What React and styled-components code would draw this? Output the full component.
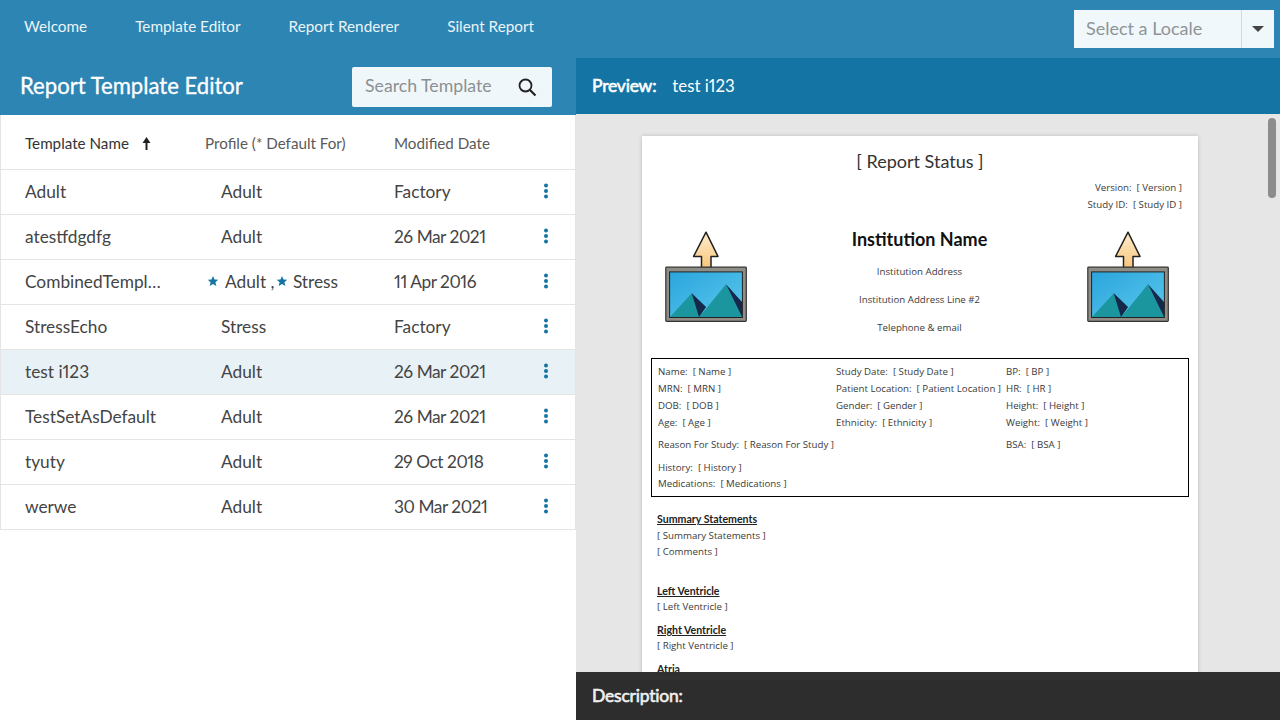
import React from "react";
import styled, { createGlobalStyle } from "styled-components";

const Global = createGlobalStyle`
  html, body { margin: 0; padding: 0; height: 100%; background: #fff; }
  body { font-family: "Lato", "Open Sans", sans-serif; overflow: hidden; font-variant-numeric: proportional-nums; }
  * { box-sizing: border-box; }
`;

const Page = styled.div`
  width: 1280px; height: 720px; display: flex; flex-direction: column; overflow: hidden;
`;
const TopBar = styled.header`
  height: 58px; flex: none; background: #2d85b3; display: flex; align-items: center;
  justify-content: space-between; padding: 0 6px 2px 24px;
`;
const Nav = styled.nav`display: flex; gap: 48px; padding-bottom: 4px;`;
const NavLink = styled.a`font-size: 15.3px; color: #eaf4f8; white-space: nowrap;`;
const LocaleSelect = styled.div`
  width: 200px; height: 38px; background: #f0f8fb; display: flex; align-items: center; margin-top: 2px;
`;
const LocaleText = styled.span`
  flex: 1; padding: 0 0 2px 12px; font-size: 18px; color: #8f9496; line-height: 34px;
`;
const LocaleCaret = styled.span`
  width: 33px; height: 38px; border-left: 1px solid #c4dde8; display: flex; align-items: center; justify-content: center;
  &::after { content: ""; border: 6px solid transparent; border-top: 6px solid #444; border-bottom: 0; }
`;
const Main = styled.div`flex: 1; display: flex; min-height: 0;`;
const LeftPanel = styled.section`width: 576px; flex: none; display: flex; flex-direction: column;`;
const LeftHeader = styled.div`
  height: 57px; flex: none; background: #2d85b3; display: flex; align-items: center; justify-content: space-between;
  padding: 0 24px 0 20px;
`;
const PanelTitle = styled.h1`margin: 0 0 2px; font-size: 22.1px; font-weight: 400; color: #fff; -webkit-text-stroke: 0.3px #fff;`;
const SearchBox = styled.div`
  width: 200px; height: 40px; margin-top: 1px; background: #f0f7fa; border-radius: 2px; display: flex; align-items: center;
  justify-content: space-between; padding: 0 15px 0 13px;
`;
const SearchText = styled.span`font-size: 17.7px; color: #8c9092; padding-bottom: 3px;`;
const Table = styled.div`display: flex; flex-direction: column; border-left: 1px solid #e4e4e4; border-right: 1px solid #e4e4e4;`;
const Row = styled.div`
  height: 45px; display: grid; grid-template-columns: 180px 189px 1fr 32px; align-items: center; padding: 0 13px 2px 24px;
  border-bottom: 1px solid #e4e4e4; background: ${(p) => (p.$selected ? "#e8f1f5" : "#fff")};
  color: #444; font-size: 17.3px;
`;
const HeadRow = styled(Row)`height: 55px; font-size: 15.2px; color: #555; padding: 2px 13px 0 24px;`;
const HeadCell = styled.span`display: flex; align-items: center; gap: 13px; color: ${(p) => (p.$active ? "#333" : "#5a5a5a")};`;
const NameCell = styled.span`display: block; width: 138px; overflow: hidden; white-space: nowrap; text-overflow: ellipsis;`;
const ProfileCell = styled.span`display: flex; align-items: center; padding-left: ${(p) => (p.$star ? "2px" : "16px")}; white-space: pre;`;
const DateCell = styled.span`letter-spacing: ${(p) => (p.$numeric ? "-0.45px" : "0")};`;
const StarIcon = styled.svg`
  width: 12px; height: 12px; flex: none; fill: #1474a4;
  margin: 0 ${(p) => (p.$tight ? 5 : 6)}px 0 ${(p) => (p.$tight ? -3 : 0)}px;
`;
const Kebab = styled.svg`width: 6px; height: 16px; justify-self: center; fill: #1474a4;`;
const RightPanel = styled.section`flex: 1; min-width: 0; display: flex; flex-direction: column; position: relative; background: #2f2f2f;`;
const PreviewHeader = styled.div`
  height: 56px; flex: none; background: #1474a4; display: flex; align-items: center; gap: 16px; padding: 0 16px 2px; color: #fff; font-size: 16.8px;
`;
const StrongLabel = styled.strong`font-weight: 400; font-size: 17.5px; letter-spacing: -0.2px; -webkit-text-stroke: 0.6px currentColor;`;
const PreviewArea = styled.div`
  height: 566px; flex: none; background: #e6e6e6; display: flex; justify-content: center; overflow: hidden; padding: 22px 82px 0 66px; position: relative;
`;
const Paper = styled.article`
  width: 556px; height: 600px; flex: none; background: #fff; box-shadow: 0 0 4px rgba(0,0,0,.18);
  padding: 14px 9px 0; color: #3a3a3a; font-family: "Open Sans", "Lato", sans-serif; font-size: 9.7px; white-space: pre;
`;
const ReportStatus = styled.div`text-align: center; font-size: 18px; line-height: 22px; color: #333; font-family: "Lato", sans-serif;`;
const MetaBlock = styled.div`text-align: right; padding-right: 7px; margin-top: 7px; line-height: 17px;`;
const Masthead = styled.div`display: grid; grid-template-columns: 100px 1fr 100px; align-items: start; margin-top: 13px; padding: 0 2px 0 14px;`;
const Logo = styled.svg`width: 84px; height: 93px; display: block; margin-top: 4px;`;
const InstitutionBlock = styled.div`text-align: center; padding: 3px 13px 0 0; color: #3a3a3a;`;
const InstitutionName = styled.div`font-size: 18px; font-weight: 700; line-height: 20px; color: #111; font-family: "Lato", sans-serif; margin-bottom: 9px;`;
const InstitutionLine = styled.div`line-height: 28px;`;
const PatientBox = styled.div`
  border: 1px solid #000; height: 139px; margin-top: 16px; padding: 4px 6px 0;
  display: grid; grid-template-columns: 178px 170px 1fr; grid-auto-rows: 17px;
`;
const Cell = styled.div`white-space: pre; line-height: 17px; grid-column: ${(p) => p.$span || "auto"}; margin-top: ${(p) => p.$mt || 0}px;`;
const Section = styled.div`padding-left: 6px; line-height: 16.5px; margin-top: ${(p) => p.$mt || 0}px;`;
const SectionTitle = styled.div`font-family: "Lato", sans-serif; font-size: 10.6px; font-weight: 700; text-decoration: underline; color: #222;`;
const DescriptionBar = styled.div`
  position: absolute; left: 0; right: 0; bottom: 0; height: 48px; background: rgba(45,45,45,.98);
  display: flex; align-items: center; padding: 0 16px 1px; color: #f0f0f0;
`;
const ScrollThumb = styled.div`
  position: absolute; top: 4px; right: 4px; width: 8px; height: 80px; border-radius: 4px; background: #8c8c8c;
`;

const rows = [
  ["Adult", "Adult", "Factory"],
  ["atestfdgdfg", "Adult", "26 Mar 2021"],
  ["CombinedTemplate", "*", "11 Apr 2016"],
  ["StressEcho", "Stress", "Factory"],
  ["test i123", "Adult", "26 Mar 2021", true],
  ["TestSetAsDefault", "Adult", "26 Mar 2021"],
  ["tyuty", "Adult", "29 Oct 2018"],
  ["werwe", "Adult", "30 Mar 2021"],
];

const Star = ({ tight }) => (
  <StarIcon $tight={tight} viewBox="0 0 24 24"><path d="M12 2l3 7 7.5.7-5.7 5 1.8 7.3L12 18l-6.6 4 1.8-7.3-5.7-5L9 9z" /></StarIcon>
);

const KebabIcon = () => (
  <Kebab viewBox="0 0 6 16"><circle cx="3" cy="2.5" r="2" /><circle cx="3" cy="8" r="2" /><circle cx="3" cy="13.5" r="2" /></Kebab>
);

const ImagePlaceholder = ({ id }) => (
  <Logo viewBox="0 0 84 93">
    <defs>
      <linearGradient id={`sky${id}`} x1="0" y1="0" x2="1" y2="1"><stop offset="0" stopColor="#2aa5dd" /><stop offset="1" stopColor="#5cc8ec" /></linearGradient>
      <linearGradient id={`arrow${id}`} x1="0" y1="0" x2="0" y2="1"><stop offset="0" stopColor="#ffeccb" /><stop offset="1" stopColor="#f9c67c" /></linearGradient>
    </defs>
    <path d="M41 2.2 L53 26.4 H46 V38 H36.5 V26.4 H28.6 Z" fill={`url(#arrow${id})`} stroke="#222" strokeWidth="1.5" strokeLinejoin="round" />
    <rect x="0.8" y="37.2" width="80.5" height="54.2" rx="0.8" fill="#8f8d86" stroke="#333" strokeWidth="1.2" />
    <rect x="4.6" y="41.9" width="72.8" height="45.6" fill={`url(#sky${id})`} stroke="#222" strokeWidth="1" />
    <path d="M5 87 L26.7 63.3 L41 77 L34.3 87 Z M34.3 87 L61 54.3 L77 87 Z" fill="#1b969f" />
    <path d="M26.7 63.3 L41 77 L34 87 Z M61 54.3 L77 72 V87 Z" fill="#16284a" />
  </Logo>
);

const patient = [
  ["Name:  [ Name ]", "Study Date:  [ Study Date ]", "BP:  [ BP ]"],
  ["MRN:  [ MRN ]", "Patient Location:  [ Patient Location ]", "HR:  [ HR ]"],
  ["DOB:  [ DOB ]", "Gender:  [ Gender ]", "Height:  [ Height ]"],
  ["Age:  [ Age ]", "Ethnicity:  [ Ethnicity ]", "Weight:  [ Weight ]"],
];

export default function App() {
  return (
    <Page>
      <Global />
      <TopBar>
        <Nav>
          {["Welcome", "Template Editor", "Report Renderer", "Silent Report"].map((n) => <NavLink key={n}>{n}</NavLink>)}
        </Nav>
        <LocaleSelect><LocaleText>Select a Locale</LocaleText><LocaleCaret /></LocaleSelect>
      </TopBar>
      <Main>
        <LeftPanel>
          <LeftHeader>
            <PanelTitle>Report Template Editor</PanelTitle>
            <SearchBox>
              <SearchText>Search Template</SearchText>
              <svg width="20" height="20" viewBox="0 0 20 20" fill="none" stroke="#222" strokeWidth="1.8"><circle cx="8.5" cy="8.5" r="6" /><path d="M13 13l5.5 5.5" strokeWidth="2.2" /></svg>
            </SearchBox>
          </LeftHeader>
          <Table>
            <HeadRow>
              <HeadCell $active>Template Name
                <svg width="9" height="13" viewBox="0 0 9 13" fill="#222"><path d="M4.5 0L8.5 6H5.5V13H3.5V6H.5z" /></svg>
              </HeadCell>
              <HeadCell>Profile (* Default For)</HeadCell>
              <HeadCell>Modified Date</HeadCell>
              <span />
            </HeadRow>
            {rows.map(([name, profile, date, sel]) => (
              <Row key={name} $selected={sel}>
                <NameCell>{name}</NameCell>
                {profile === "*" ? (
                  <ProfileCell $star><Star />Adult , <Star tight />Stress</ProfileCell>
                ) : <ProfileCell>{profile}</ProfileCell>}
                <DateCell $numeric={/\d/.test(date)}>{date}</DateCell>
                <KebabIcon />
              </Row>
            ))}
          </Table>
        </LeftPanel>
        <RightPanel>
          <PreviewHeader><StrongLabel>Preview:</StrongLabel><span>test i123</span></PreviewHeader>
          <PreviewArea>
            <Paper>
              <ReportStatus>[ Report Status ]</ReportStatus>
              <MetaBlock>Version:  [ Version ]<br />Study ID:  [ Study ID ]</MetaBlock>
              <Masthead>
                <ImagePlaceholder id="a" />
                <InstitutionBlock>
                  <InstitutionName>Institution Name</InstitutionName>
                  <InstitutionLine>Institution Address</InstitutionLine>
                  <InstitutionLine>Institution Address Line #2</InstitutionLine>
                  <InstitutionLine>Telephone &amp; email</InstitutionLine>
                </InstitutionBlock>
                <ImagePlaceholder id="b" />
              </Masthead>
              <PatientBox>
                {patient.flat().map((c) => <Cell key={c}>{c}</Cell>)}
                <Cell $span="1 / span 2" $mt={5}>Reason For Study:  [ Reason For Study ]</Cell>
                <Cell $mt={5}>BSA:  [ BSA ]</Cell>
                <Cell $span="1 / -1" $mt={11}>History:  [ History ]</Cell>
                <Cell $span="1 / -1" $mt={10}>Medications:  [ Medications ]</Cell>
              </PatientBox>
              <Section $mt={14}><SectionTitle>Summary Statements</SectionTitle>[ Summary Statements ]<br />[ Comments ]</Section>
              <Section $mt={22}><SectionTitle>Left Ventricle</SectionTitle>[ Left Ventricle ]</Section>
              <Section $mt={6}><SectionTitle>Right Ventricle</SectionTitle>[ Right Ventricle ]</Section>
              <Section $mt={6}><SectionTitle>Atria</SectionTitle></Section>
            </Paper>
            <ScrollThumb />
          </PreviewArea>
          <DescriptionBar><StrongLabel>Description:</StrongLabel></DescriptionBar>
        </RightPanel>
      </Main>
    </Page>
  );
}
